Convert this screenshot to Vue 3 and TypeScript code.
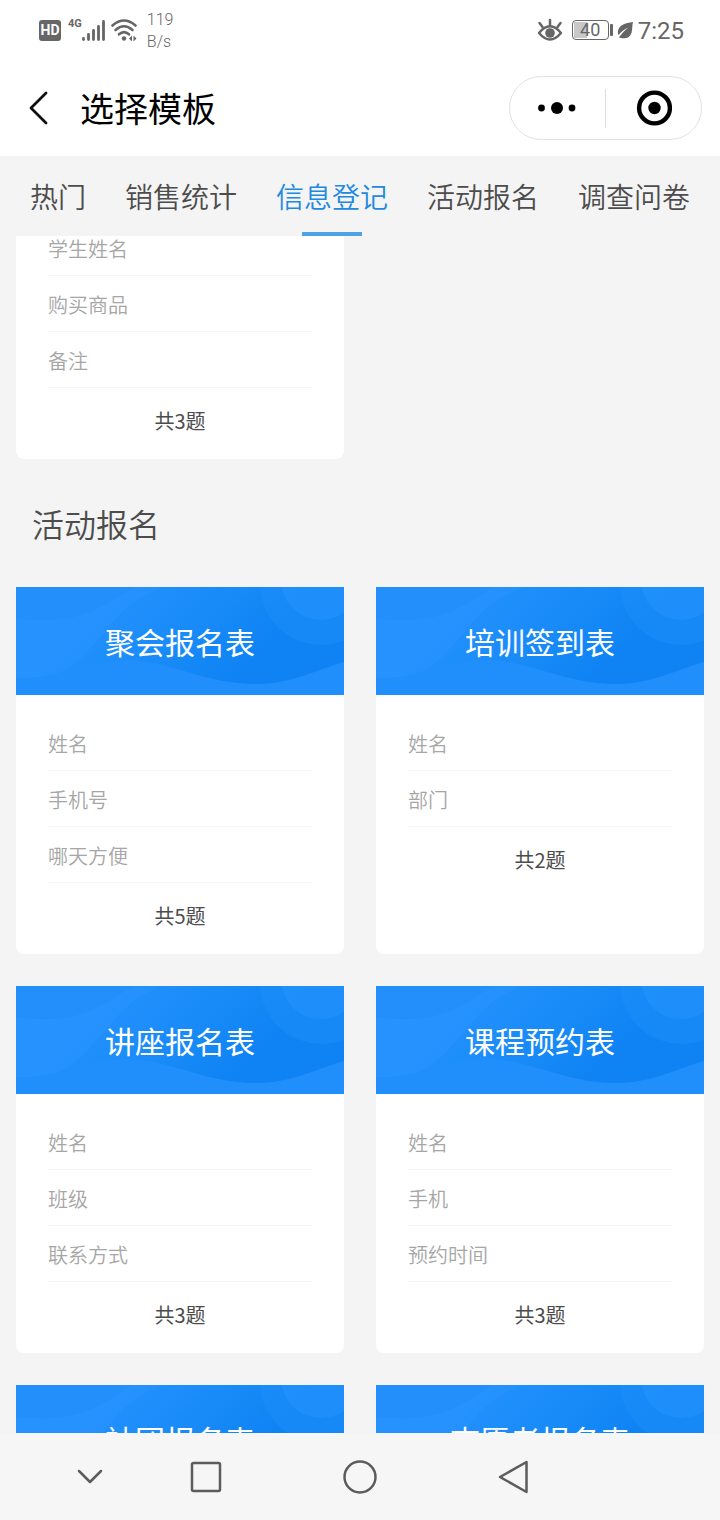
<script setup lang="ts">
import { ref } from 'vue'

interface Template {
  title: string
  fields: string[]
  total?: number
}

const tabs: string[] = ['热门', '销售统计', '信息登记', '活动报名', '调查问卷']
const active = ref(2)

const registerFields: string[] = ['学生姓名', '购买商品', '备注']

const templates: Template[] = [
  { title: '聚会报名表', fields: ['姓名', '手机号', '哪天方便'], total: 5 },
  { title: '培训签到表', fields: ['姓名', '部门'], total: 2 },
  { title: '讲座报名表', fields: ['姓名', '班级', '联系方式'], total: 3 },
  { title: '课程预约表', fields: ['姓名', '手机', '预约时间'], total: 3 },
  { title: '社团报名表', fields: [] },
  { title: '志愿者报名表', fields: [] },
]
</script>

<template>
  <div class="app">
    <div class="status">
      <div class="status-side">
        <span class="hd">HD</span>
        <span class="net">4G</span>
        <svg class="signal" width="24" height="24" viewBox="0 0 24 24" aria-hidden="true">
          <g stroke="#666" stroke-width="2.800" stroke-linecap="round">
            <path d="M1.500 21.500v-1M6.500 21.500v-5M11.500 21.500v-9M16.500 21.500v-13M21.500 21.500v-18" />
          </g>
        </svg>
        <svg class="wifi" width="28" height="24" viewBox="0 0 28 24" aria-hidden="true">
          <g fill="none" stroke="#666" stroke-width="2.600" stroke-linecap="round">
            <path d="M1.500 7.500Q13 -2.500 24.500 7.500" />
            <path d="M4.500 12Q13 4.500 21.500 12" />
            <path d="M8 16.300Q13 12 18 16.300" />
          </g>
          <circle cx="13" cy="20.500" r="2.200" fill="#666" />
          <path d="M21 17.500v6l-3-3zM22.500 17.500v6l3-3z" fill="#666" />
        </svg>
        <span class="speed">119<br />B/s</span>
      </div>
      <div class="status-side">
        <svg class="eye" width="26" height="24" viewBox="0 0 26 24" aria-hidden="true">
          <g fill="none" stroke="#666" stroke-width="2.500" stroke-linecap="round">
            <path d="M2 15Q13 1.500 24 15Q13 28 2 15z" stroke-linejoin="round" />
            <path d="M13 2v5M2.500 5l3 4M23.500 5l-3 4" />
          </g>
          <circle cx="13" cy="15" r="4.800" fill="#666" />
        </svg>
        <span class="battery"><span class="level">40</span></span>
        <span class="tip"></span>
        <svg class="leaf" width="17" height="18" viewBox="0 0 17 18" aria-hidden="true">
          <path d="M16 1C8 2 2 4 1 10c-.3 2 0 3 .5 4C5 10 8 8 11.500 6.500 8 9 5 12 2 16.500l1.500.5c5 1 9 0 11-5C15.500 8 15 5 16 1z" fill="#666" />
        </svg>
        <span class="time">7:25</span>
      </div>
    </div>

    <header class="bar">
      <button class="back" aria-label="返回">
        <svg width="22" height="36" viewBox="0 0 22 36" aria-hidden="true">
          <path d="M18 3L3 18l15 15" fill="none" stroke="#111" stroke-width="2.800" stroke-linecap="round" stroke-linejoin="round" />
        </svg>
      </button>
      <h1>选择模板</h1>
      <div class="capsule">
        <button aria-label="更多">
          <svg width="40" height="14" viewBox="0 0 40 14" aria-hidden="true">
            <circle cx="3.500" cy="7" r="3.400" />
            <circle cx="19" cy="7" r="6" />
            <circle cx="34" cy="7" r="3.400" />
          </svg>
        </button>
        <span class="divider"></span>
        <button aria-label="关闭">
          <svg width="36" height="36" viewBox="0 0 36 36" aria-hidden="true">
            <circle cx="18.500" cy="18" r="15.400" fill="none" stroke="#000" stroke-width="4.400" />
            <circle cx="18.500" cy="18" r="6.200" />
          </svg>
        </button>
      </div>
    </header>

    <nav class="tabs">
      <button
        v-for="(tab, i) in tabs"
        :key="tab"
        :class="{ active: i === active }"
        @click="active = i"
      >{{ tab }}</button>
    </nav>

    <main class="content">
      <div class="grid scrolled">
        <article class="card">
          <ul class="rows">
            <li v-for="field in registerFields" :key="field">{{ field }}</li>
          </ul>
          <p class="total">共3题</p>
        </article>
      </div>

      <h2>活动报名</h2>

      <div class="grid">
        <article v-for="item in templates" :key="item.title" class="card">
          <div class="banner">
            <svg class="art" viewBox="0 0 328 108" preserveAspectRatio="none" aria-hidden="true">
              <defs>
                <linearGradient id="base" x1="0" y1="0" x2="1" y2="0.330">
                  <stop offset="0.250" stop-color="#2491fd" />
                  <stop offset="0.600" stop-color="#188bf8" />
                  <stop offset="0.850" stop-color="#0f83f4" />
                </linearGradient>
              </defs>
              <rect width="328" height="108" fill="url(#base)" />
              <path d="M0 31Q50 38 82 21Q100 12 116 0H0z" fill="#238ffa" />
              <path d="M0 91C48 93 58 79 82 53C98 36 112 10 150 0H116Q100 12 82 21Q50 38 0 31z" fill="#2893ff" opacity="0.500" />
              <path d="M0 91C48 93 60 73 115 73C160 76 190 97 240 97C275 97 300 83 328 75V108H0z" fill="#218ffb" />
              <circle cx="305" cy="-3" r="61" fill="#1f90fb" opacity="0.450" />
              <circle cx="305" cy="-7" r="40" fill="#2896fc" opacity="0.450" />
            </svg>
            <h3>{{ item.title }}</h3>
          </div>
          <ul v-if="item.fields.length" class="rows body">
            <li v-for="field in item.fields" :key="field">{{ field }}</li>
          </ul>
          <p v-if="item.total" class="total">共{{ item.total }}题</p>
        </article>
      </div>
    </main>

    <footer class="system">
      <button class="first" aria-label="收起">
        <svg width="28" height="36" viewBox="0 0 28 36" aria-hidden="true">
          <path d="M3 12l11 11 11-11" />
        </svg>
      </button>
      <button aria-label="最近任务">
        <svg width="36" height="36" viewBox="0 0 36 36" aria-hidden="true">
          <rect x="4" y="4" width="28" height="28" rx="1.500" />
        </svg>
      </button>
      <button aria-label="主页">
        <svg width="36" height="36" viewBox="0 0 36 36" aria-hidden="true">
          <circle cx="18" cy="18" r="15.500" />
        </svg>
      </button>
      <button aria-label="后退">
        <svg width="36" height="36" viewBox="0 0 36 36" aria-hidden="true">
          <path d="M30.500 3L4 18l26.500 15z" />
        </svg>
      </button>
    </footer>
  </div>
</template>

<style>
body {
  margin: 0;
  background: #f4f4f4;
}
</style>

<style scoped>
.app {
  display: flex;
  flex-direction: column;
  height: 100vh;
  overflow: hidden;
  background: #f4f4f4;
  color: #4c4c4c;
  font-family: "Noto Sans CJK SC", sans-serif;
}
button {
  padding: 0;
  border: 0;
  background: none;
  color: inherit;
  font: inherit;
  cursor: pointer;
}
svg {
  display: block;
}
h1, h2, h3, p, ul {
  margin: 0;
  padding: 0;
  font-weight: 400;
  list-style: none;
}
.card, .tabs, h2 {
  font-weight: 350;
}
.status {
  display: flex;
  flex: none;
  justify-content: space-between;
  height: 60px;
  padding: 0 36px 0 39px;
  background: #fff;
  color: #666;
  font-family: Roboto, sans-serif;
}
.status-side {
  display: flex;
  align-items: center;
}
.hd {
  width: 22px;
  border-radius: 3px;
  background: #666;
  color: #fff;
  font-size: 14px;
  font-weight: 700;
  line-height: 21px;
  text-align: center;
}
.net {
  align-self: flex-start;
  margin: 16px 0 0 7px;
  font-size: 11px;
  font-weight: 700;
  line-height: 16px;
}
.signal {
  margin-right: 5px;
}
.wifi {
  margin-right: 8px;
}
.speed {
  padding-top: 2px;
  font-size: 16px;
  font-weight: 300;
  line-height: 22px;
}
.eye {
  margin-right: 9px;
}
.battery {
  box-sizing: border-box;
  width: 37px;
  padding: 1px;
  border: 1px solid #666;
  border-radius: 4px;
}
.level {
  display: block;
  background: linear-gradient(90deg, #c8c8c8 40%, transparent 40%);
  font-size: 18px;
  line-height: 16px;
  text-align: center;
}
.tip {
  width: 3px;
  height: 12px;
  margin: 0 4px 0 1px;
  border-radius: 1px;
  background: #666;
}
.leaf {
  margin-right: 4px;
}
.time {
  padding-top: 2px;
  font-size: 24px;
  line-height: 32px;
}
.bar {
  display: flex;
  flex: none;
  align-items: center;
  height: 96px;
  padding: 0 18px 0 28px;
  background: #fff;
  color: #000;
}
.back {
  width: 52px;
}
h1 {
  flex: 1;
  font-size: 34px;
  line-height: 48px;
}
.capsule {
  display: flex;
  box-sizing: border-box;
  align-items: center;
  width: 193px;
  height: 64px;
  border: 1px solid #e2e2e2;
  border-radius: 32px;
}
.capsule button {
  display: flex;
  flex: 1;
  justify-content: center;
}
.divider {
  width: 1px;
  height: 39px;
  background: #ddd;
}
.tabs {
  position: relative;
  z-index: 1;
  display: flex;
  flex: none;
  justify-content: space-between;
  height: 80px;
  padding: 0 30px;
  background: #f4f4f4;
}
.tabs button {
  display: flex;
  flex-direction: column;
  align-items: center;
  font-size: 28px;
  line-height: 80px;
}
.tabs .active {
  color: #2289e0;
}
.tabs .active::after {
  width: 60px;
  height: 4px;
  margin-top: -4px;
  background: #4ea3e6;
  content: "";
}
.content {
  flex: 1;
  min-height: 0;
  overflow: hidden;
}
.grid {
  display: grid;
  grid-template-columns: 1fr 1fr;
  gap: 32px;
  padding: 0 16px;
}
.scrolled {
  margin-top: -16px;
}
.card {
  overflow: hidden;
  border-radius: 0 0 8px 8px;
  background: #fff;
}
.banner {
  display: grid;
  height: 108px;
}
.art, h3 {
  grid-area: 1 / 1;
}
.art {
  width: 100%;
  height: 108px;
}
h3 {
  z-index: 1;
  color: #fff;
  font-size: 30px;
  line-height: 108px;
  text-align: center;
}
.rows {
  padding: 0 32px;
}
.body {
  padding-top: 20px;
}
.rows li {
  box-sizing: border-box;
  height: 56px;
  border-bottom: 1px solid #f6f6f6;
  color: #a6a6a6;
  font-size: 20px;
  font-weight: 350;
  line-height: 58px;
}
.total {
  padding-bottom: 5px;
  color: #4c4c4c;
  font-size: 20px;
  line-height: 66px;
  text-align: center;
}
h2 {
  padding: 0 32px;
  font-size: 32px;
  line-height: 128px;
}
.system {
  display: grid;
  flex: none;
  grid-template-columns: 51fr 78fr 154fr 154fr 154fr 129fr;
  height: 87px;
  background: #f6f6f6;
}
.system button {
  display: flex;
  align-items: center;
  justify-content: center;
}
.system .first {
  grid-column: 2;
}
.system svg {
  fill: none;
  stroke: #5c5c5c;
  stroke-width: 2.5px;
  stroke-linecap: round;
  stroke-linejoin: round;
}
</style>
